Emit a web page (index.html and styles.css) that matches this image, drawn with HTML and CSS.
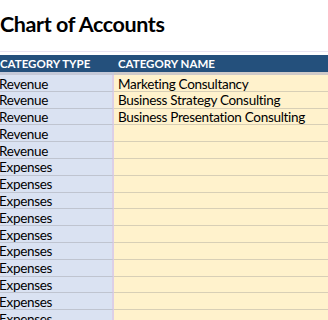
FILE: index.html
```html
<!DOCTYPE html>
<html>
<head>
<meta charset="utf-8">
<link rel="stylesheet" href="styles.css">
</head>
<body>
<div class="sheet">
  <h1 class="title">Chart of Accounts</h1>
  <div class="table">
    <div class="head">
      <div class="hcell type">CATEGORY TYPE</div>
      <div class="hcell name">CATEGORY NAME</div>
    </div>
    <div class="gap"><div class="gap-l"></div><div class="gap-r"></div></div>
    <div class="row"><div class="cell type">Revenue</div><div class="cell name">Marketing Consultancy</div></div>
    <div class="row"><div class="cell type">Revenue</div><div class="cell name">Business Strategy Consulting</div></div>
    <div class="row"><div class="cell type">Revenue</div><div class="cell name">Business Presentation Consulting</div></div>
    <div class="row"><div class="cell type">Revenue</div><div class="cell name"></div></div>
    <div class="row"><div class="cell type">Revenue</div><div class="cell name"></div></div>
    <div class="row"><div class="cell type">Expenses</div><div class="cell name"></div></div>
    <div class="row"><div class="cell type">Expenses</div><div class="cell name"></div></div>
    <div class="row"><div class="cell type">Expenses</div><div class="cell name"></div></div>
    <div class="row"><div class="cell type">Expenses</div><div class="cell name"></div></div>
    <div class="row"><div class="cell type">Expenses</div><div class="cell name"></div></div>
    <div class="row"><div class="cell type">Expenses</div><div class="cell name"></div></div>
    <div class="row"><div class="cell type">Expenses</div><div class="cell name"></div></div>
    <div class="row"><div class="cell type">Expenses</div><div class="cell name"></div></div>
    <div class="row"><div class="cell type">Expenses</div><div class="cell name"></div></div>
    <div class="row"><div class="cell type">Expenses</div><div class="cell name"></div></div>
  </div>
</div>
</body>
</html>
```
FILE: styles.css
```css
html, body {
  margin: 0;
  padding: 0;
  background: #ffffff;
  overflow: hidden;
}
.sheet {
  width: 328px;
  height: 320px;
  overflow: hidden;
  font-family: Lato, "Open Sans", sans-serif;
  color: #000;
}
.title {
  margin: 0;
  padding: 12px 0 0 0;
  height: 39px;
  font-size: 21.5px;
  font-weight: 700;
  line-height: 25px;
  letter-spacing: -0.4px;
  color: #000;
  border-bottom: 1px solid #e8e4f2;
}
.table {
  display: flex;
  flex-direction: column;
  padding-top: 3px;
}
.head {
  display: grid;
  grid-template-columns: 114px 1fr;
  height: 17px;
  background: #24507c;
  color: #fff;
}
.hcell {
  font-size: 11.5px;
  font-weight: 700;
  line-height: 18px;
}
.hcell.type { padding-left: 0; }
.hcell.name { padding-left: 4px; }
.gap {
  display: grid;
  grid-template-columns: 114px 1fr;
  height: 3px;
}
.gap-l { background: #c5c9d8; }
.gap-r { background: #cfcac8; }
.row {
  display: grid;
  grid-template-columns: 114px 1fr;
  height: 16.8px;
}
.cell {
  box-sizing: border-box;
  height: 16.8px;
  padding-top: 1.5px;
  font-size: 13.5px;
  line-height: 14.3px;
  letter-spacing: -0.3px;
  border-bottom: 1px solid #c8c8cc;
  white-space: nowrap;
}
.cell.type {
  background: #dae2f2;
  text-indent: -1px;
  border-right: 2px solid #dccfe6;
  border-bottom-color: #bfc4d0;
}
.cell.name {
  background: #fff2cc;
  padding-left: 4px;
  border-bottom-color: #d8cfb6;
}
```
